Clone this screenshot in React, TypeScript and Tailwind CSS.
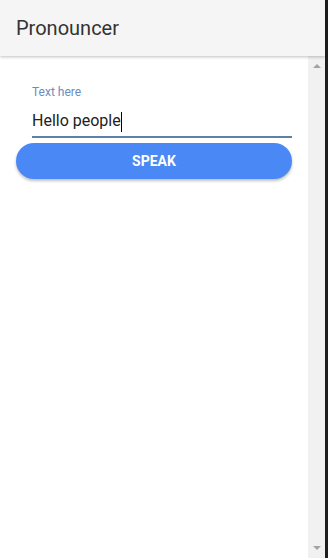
import React from "react";

export default function App() {
  return (
    <div className="w-[328px] h-[558px] flex bg-white overflow-hidden" style={{ fontFamily: "Roboto, 'Liberation Sans', sans-serif" }}>
      <div className="w-[325px] h-full flex flex-col">
        <header className="h-[56px] shrink-0 bg-[#f5f5f5] flex items-center px-4 shadow-[0_1px_3px_rgba(0,0,0,0.25)] relative z-10">
          <h1 className="text-[20px] text-[#333333] font-normal leading-none">Pronouncer</h1>
        </header>
        <div className="flex-1 flex min-h-0">
          <main className="flex-1 flex flex-col px-4 pt-[29px]">
            <div className="pl-4">
              <label className="block text-[12px] leading-[14px] text-[#6a8cc0]">Text here</label>
              <div className="mt-[12px] h-[27px] border-b-2 border-[#5e80a8] flex items-start">
                <span className="text-[16px] leading-[20px] text-[#222222]">Hello people</span>
                <span className="w-px h-[20px] bg-black mt-[1px]" />
              </div>
            </div>
            <button className="mt-[5px] h-[36px] w-full rounded-full bg-[#4a88f6] text-white text-[14px] font-bold shadow-[0_2px_3px_rgba(0,0,0,0.25)]">
              SPEAK
            </button>
          </main>
          <div className="w-[17px] bg-[#f1f1f1] flex flex-col items-center justify-between py-[8px]">
            <div className="w-0 h-0 border-l-[4px] border-r-[4px] border-b-[4px] border-l-transparent border-r-transparent border-b-[#a3a3a3]" />
            <div className="w-0 h-0 border-l-[4px] border-r-[4px] border-t-[4px] border-l-transparent border-r-transparent border-t-[#a3a3a3]" />
          </div>
        </div>
      </div>
      <div className="w-[3px] h-full bg-[#1e1e1e]" />
    </div>
  );
}
